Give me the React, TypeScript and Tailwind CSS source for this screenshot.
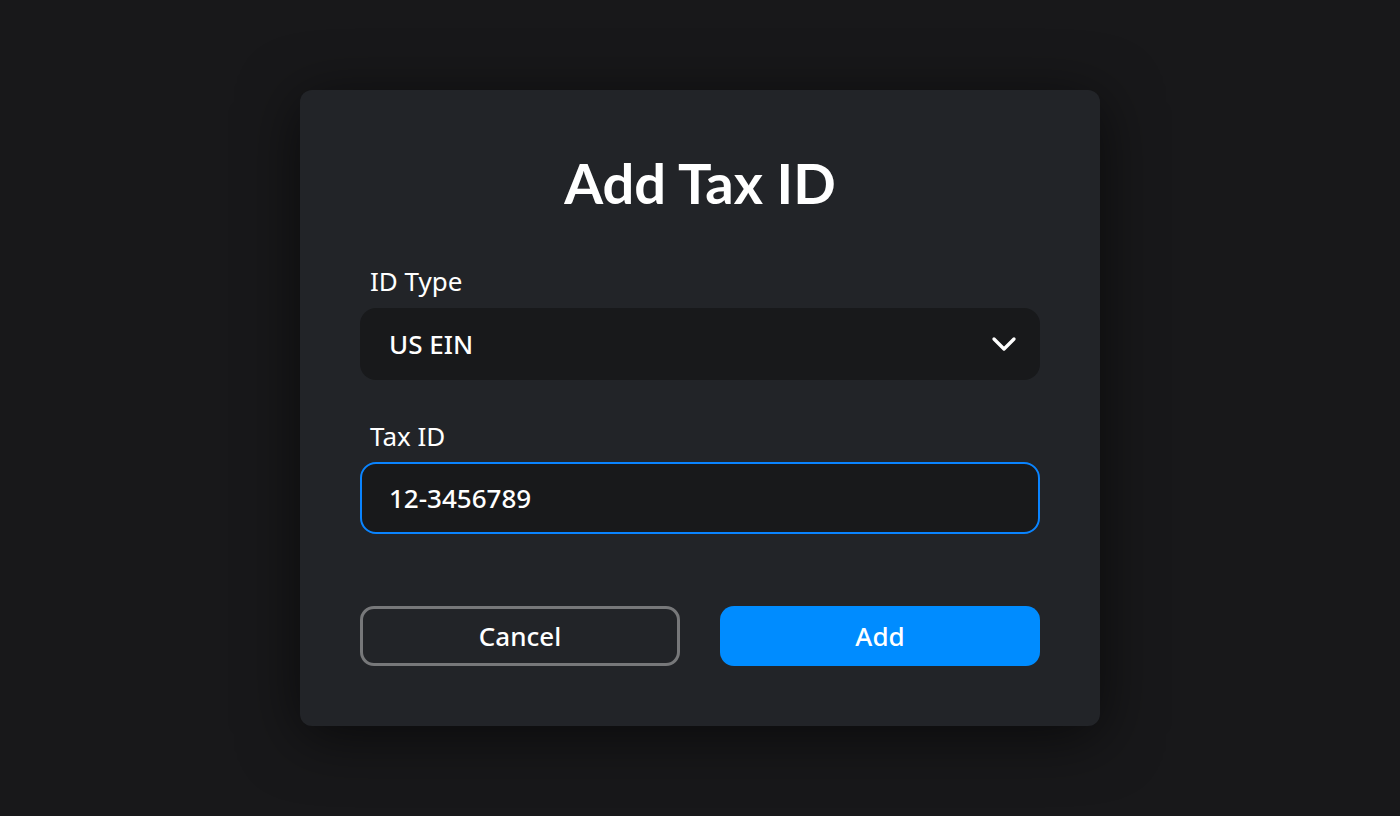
import { ChevronDown } from 'lucide-react'

export default function App() {
  return (
    <div className="flex h-[816px] w-full items-start justify-center bg-[#18181a] pt-[90px] font-['Noto_Sans',sans-serif] text-white">
      <div className="flex w-[800px] flex-col rounded-xl bg-[#222428] px-[60px] pb-[60px] pt-[61px] shadow-[0_10px_60px_rgba(0,0,0,0.6)]">
        <h1 className="text-center font-['Lato',sans-serif] text-[56px] font-bold leading-[64px]">
          Add Tax ID
        </h1>

        <label className="mt-[50px] pl-[10px] text-[26px] leading-8">ID Type</label>
        <div className="mt-[11px] flex h-[72px] items-center justify-between rounded-2xl bg-[#18191b] pl-[29px] pr-4">
          <span className="text-[26px] font-medium">US EIN</span>
          <ChevronDown className="h-10 w-10" strokeWidth={2} />
        </div>

        <label className="mt-[40px] pl-[10px] text-[26px] leading-8">Tax ID</label>
        <div className="mt-[10px] flex h-[72px] items-center rounded-2xl border-2 border-[#0a84ff] bg-[#18191b] pl-[27px]">
          <span className="text-[26px] font-medium">12-3456789</span>
        </div>

        <div className="mt-[72px] flex justify-between">
          <button className="flex h-[60px] w-[320px] items-center justify-center rounded-[14px] border-[3px] border-[#77787a] text-[26px] font-medium">
            Cancel
          </button>
          <button className="flex h-[60px] w-[320px] items-center justify-center rounded-[14px] bg-[#008cff] text-[26px] font-medium">
            Add
          </button>
        </div>
      </div>
    </div>
  )
}
